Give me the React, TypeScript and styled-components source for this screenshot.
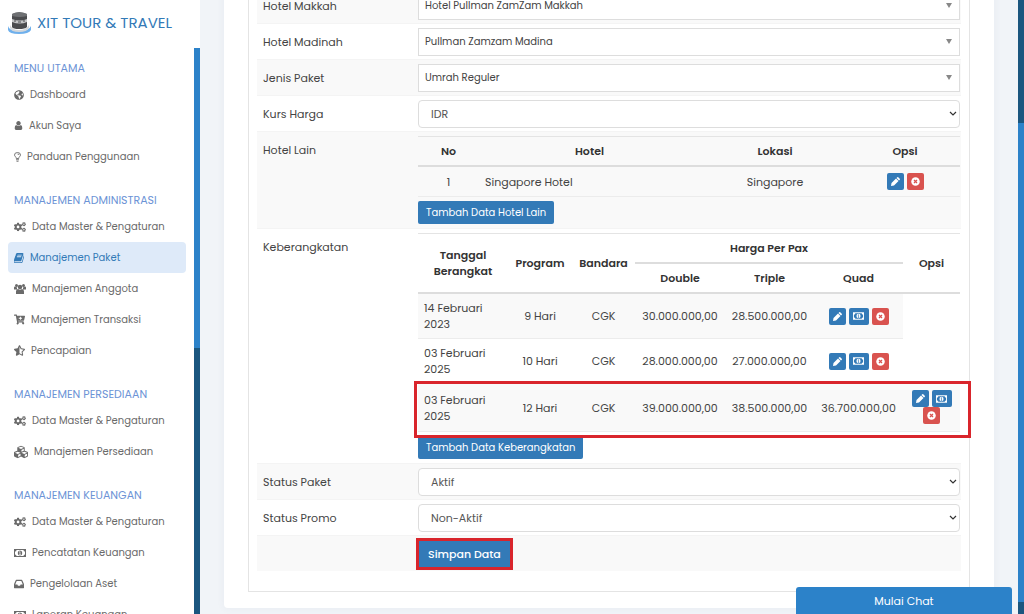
import React from "react";
import styled, { createGlobalStyle, css } from "styled-components";
import { FaGlobeAmericas, FaCogs, FaStarHalfAlt, FaCubes, FaCartPlus } from "react-icons/fa";

const blue = "#337ab7";
const line = "#e4e4e4";

const GlobalStyle = createGlobalStyle`
  * { box-sizing: border-box; }
  body {
    margin: 0;
    height: 100vh;
    overflow: hidden;
    background: #f1f4f8;
    color: #444;
    font: 400 11px/16px Poppins, Inter, "Liberation Sans", sans-serif;
  }
  button, select { font: inherit; }
`;

const Page = styled.div`
  display: flex;
  height: 100vh;
  overflow: hidden;
`;

const Sidebar = styled.aside`
  flex: 0 0 200px;
  background: #fff;
  display: flex;
  flex-direction: column;
`;

const Brand = styled.a`
  flex: 0 0 48px;
  display: flex;
  align-items: center;
  gap: 6px;
  padding: 0 8px 2px;
  color: ${blue};
  font-size: 15px;
  white-space: nowrap;
  text-decoration: none;
`;

const SideBody = styled.div`
  flex: 1;
  min-height: 0;
  display: flex;
`;

const Nav = styled.nav`
  flex: 1;
  overflow: hidden;
  padding: 4px 8px;
`;

const NavTitle = styled.h2`
  margin: 0;
  padding: 8px 6px 3px;
  font-size: 11px;
  font-weight: 400;
  line-height: 16px;
  color: #6c93d6;
  white-space: nowrap;
`;

const NavList = styled.ul`
  list-style: none;
  margin: 0 0 12px;
  padding: 0;
`;

const NavLink = styled.a<{ $active?: boolean }>`
  display: flex;
  align-items: center;
  gap: 6px;
  height: 31px;
  padding: 0 6px;
  border-radius: 4px;
  color: ${(p) => (p.$active ? blue : "#6a6a6a")};
  background: ${(p) => (p.$active ? "#deeaf9" : "transparent")};
  font-size: 10px;
  text-decoration: none;
  white-space: nowrap;
`;

const Track = styled.div<{ $side: "left" | "right" }>`
  flex: 0 0 6px;
  background: ${(p) =>
    p.$side === "left"
      ? "linear-gradient(#2c82c9 53%, #1b567f 53%)"
      : "linear-gradient(#1b567f 20%, #2c82c9 20%, #2c82c9 98%, #1b567f 98%)"};
`;

const Main = styled.main`
  flex: 1;
  min-width: 0;
  padding: 0 24px;
`;

const Card = styled.section`
  background: #fff;
  border-radius: 0 0 4px 4px;
  box-shadow: 0 0 8px rgba(60, 80, 120, 0.06);
  padding: 0 24px 16px;
`;

const Panel = styled.form`
  margin-top: -13px;
  border: 1px solid ${line};
  border-top: 0;
  padding: 0 8px 20px;
`;

const Row = styled.div<{ $striped?: boolean }>`
  display: grid;
  grid-template-columns: 161px minmax(0, 1fr);
  border-top: 1px solid #f4f4f4;
  background: ${(p) => (p.$striped ? "#f9f9f9" : "#fff")};
`;

const labelStyle = css`
  padding: 10px 6px 0;
`;
const Label = styled.label`${labelStyle}`;
const Caption = styled.span`${labelStyle}`;

const Value = styled.div<{ $table?: boolean }>`
  padding: 4px 1px ${(p) => (p.$table ? "4px" : "3px")} 0;
`;

const SelectWrap = styled.div`
  position: relative;
`;

const Select = styled.select<{ $flat?: boolean }>`
  display: block;
  width: 100%;
  height: 28px;
  padding: 0 ${(p) => (p.$flat ? "6px" : "12px")};
  border: 1px solid #ddd;
  border-radius: ${(p) => (p.$flat ? "0" : "4px")};
  background: #fff;
  color: ${(p) => (p.$flat ? "#444" : "#555")};
  font-size: ${(p) => (p.$flat ? "10px" : "11px")};
  appearance: none;
`;

const SelectMark = styled.svg<{ $flat?: boolean }>`
  position: absolute;
  top: 11px;
  right: ${(p) => (p.$flat ? "8px" : "3px")};
  pointer-events: none;
`;

const Table = styled.table`
  width: 100%;
  border-collapse: collapse;
  table-layout: fixed;
  border-top: 1px solid ${line};
`;

const Th = styled.th`
  padding: 6px;
  font-size: 11px;
  font-weight: 600;
  color: #333;
  border-bottom: 2px solid #ddd;
`;

const DepartureRow = styled.tr<{ $tall?: boolean }>`
  height: ${(p) => (p.$tall ? "48px" : "auto")};
`;

const Td = styled.td<{ $left?: boolean; $shade?: boolean; $tight?: boolean }>`
  padding: ${(p) => (p.$tight ? "6px 0" : "6px")};
  text-align: ${(p) => (p.$left ? "left" : "center")};
  background: ${(p) => (p.$shade ? "#f9f9f9" : "transparent")};
  border-bottom: 1px solid #ececec;
`;

const Actions = styled.div`
  display: flex;
  flex-wrap: wrap;
  justify-content: center;
  column-gap: 3px;
`;

const IconButton = styled.button<{ $danger?: boolean; $wide?: boolean }>`
  display: grid;
  place-items: center;
  width: ${(p) => (p.$wide ? "20px" : "17px")};
  height: 17px;
  padding: 0;
  border: 0;
  border-radius: 2px;
  color: #fff;
  background: ${(p) => (p.$danger ? "#d9534f" : blue)};
`;

const Button = styled.button<{ $large?: boolean }>`
  display: block;
  height: ${(p) => (p.$large ? "28px" : "23px")};
  padding: 0 ${(p) => (p.$large ? "10px" : "8px")};
  border: 0;
  border-radius: 2px;
  color: #fff;
  background: ${blue};
  font-size: ${(p) => (p.$large ? "11px" : "10px")};
  font-weight: ${(p) => (p.$large ? 500 : 400)};
  white-space: nowrap;
`;

const TableGap = styled.div`
  height: 4px;
`;

const Marked = styled.div`
  position: relative;
  width: max-content;
`;

const Frame = styled.span`
  position: absolute;
  inset: -2px;
  border: 3px solid #d9252c;
  pointer-events: none;
`;

const TableArea = styled.div`
  position: relative;
`;

const RowFrame = styled.span`
  position: absolute;
  left: -4px;
  right: -11px;
  bottom: -6px;
  height: 57px;
  border: 3px solid #d9252c;
  pointer-events: none;
`;

const Chat = styled.button`
  position: fixed;
  right: 12px;
  bottom: 0;
  width: 216px;
  height: 27px;
  border: 0;
  border-radius: 3px 3px 0 0;
  background: #2c82c9;
  color: #fff;
  font-size: 11px;
`;

const Glyph = ({ d, w = 10 }: { d: string; w?: number }) => (
  <svg width={w} height={w} viewBox="128 128 1536 1536" fill="currentColor" aria-hidden="true">
    <path d={d} />
  </svg>
);

const userPath =
  "M1536 1399q0 109-62.5 187t-150.5 78h-854q-88 0-150.5-78t-62.5-187q0-85 8.500-160.500t31.500-152 58.500-131 94-89 134.500-34.500q131 128 313 128t313-128q76 0 134.500 34.500t94 89 58.500 131 31.500 152 8.500 160.500zm-256-887q0 159-112.500 271.500t-271.500 112.500-271.500-112.500-112.500-271.500 112.500-271.500 271.500-112.500 271.500 112.500 112.500 271.500z";
const bookPath =
  "M1703 478q40 57 18 129l-275 906q-19 64-76.500 107.500t-122.500 43.500h-923q-77 0-148.500-53.500t-99.500-131.500q-24-67-2-127 0-4 3-27t4-37q1-8-3-21.500t-3-19.500q2-11 8-21t16.500-23.500 16.500-23.500q23-38 45-91.500t30-91.500q3-10 .5-30t-.5-28q3-11 17-28t17-23q21-36 42-92t25-90q1-9-2.500-32t.5-28q4-13 22-30.500t22-22.500q19-26 42.500-84.500t27.500-96.500q1-8-3-25.500t-2-26.500q2-8 9-18t18-23 17-21q8-12 16.500-30.500t15-35 16-36 19.500-32 26.500-23.500 36-11.500 47.500 5.500l-1 3q38-9 51-9h761q74 0 114 56t18 130l-274 906q-36 119-71.500 153.500t-128.500 34.500h-869q-27 0-38 15-11 16-1 43 24 70 144 70h923q29 0 56-15.500t35-41.500l300-987q7-22 5-57 38 15 59 43zm-1064 2q-4 13 2 22.500t20 9.500h608q13 0 25.500-9.500t16.500-22.500l21-64q4-13-2-22.500t-20-9.500h-608q-13 0-25.500 9.500t-16.500 22.500zm-83 256q-4 13 2 22.500t20 9.500h608q13 0 25.500-9.500t16.500-22.500l21-64q4-13-2-22.500t-20-9.500h-608q-13 0-25.500 9.500t-16.500 22.500z";
const inboxPath =
  "M1151 960h316q-1-3-2.500-8t-2.500-8l-212-496h-708l-212 496q-1 2-2.500 8t-2.500 8h316l95 192h320zm513 30v482q0 26-19 45t-45 19h-1408q-26 0-45-19t-19-45v-482q0-62 25-123l238-552q10-25 36.500-42t52.500-17h832q26 0 52.500 17t36.500 42l238 552q25 61 25 123z";

const BulbIcon = () => (
  <svg width="7" height="10" viewBox="0 0 14 20" fill="none" stroke="currentColor" strokeWidth="1.800" aria-hidden="true">
    <path d="M4.500 13Q4.500 11 3 9.500Q1 7.500 1 6Q1 1 7 1T13 6Q13 7.500 11 9.500Q9.500 11 9.500 13z" />
    <path d="M4 15.500h6M5 18.500h4M7 4q3 0 3 2" />
  </svg>
);

const UsersIcon = () => (
  <svg width="12" height="12" viewBox="0 0 24 24" fill="currentColor" aria-hidden="true">
    <circle cx="5" cy="5" r="3" />
    <circle cx="19" cy="5" r="3" />
    <circle cx="12" cy="8" r="4.500" />
    <path d="M0 13V9q0-2 2-2l4 2v4zM24 13V9q0-2-2-2l-4 2v4zM4 22v-5q0-5 4-5 4 3 8 0 4 0 4 5v5z" />
  </svg>
);

const MoneyIcon = ({ w = 12 }: { w?: number }) => (
  <svg width={w} height={Math.round(w * 0.7)} viewBox="0 0 24 16" aria-hidden="true">
    <path
      fill="currentColor"
      fillRule="evenodd"
      d="M0 0h24v16H0zM5 2q0 3-3 3v6q3 0 3 3h14q0-3 3-3V5q-3 0-3-3z"
    />
    <ellipse cx="12" cy="8" rx="4.500" ry="5" fill="currentColor" />
    <path d="M10.500 6l1.500-1v6m-1.500 0h3" stroke={w < 12 ? blue : "#fff"} strokeWidth="1.400" fill="none" />
  </svg>
);

const PencilIcon = () => (
  <svg width="9" height="9" viewBox="0 0 18 18" fill="currentColor" aria-hidden="true">
    <path d="M0 18l1-6L10 3l5 5-9 9zM11 2l1.500-1.500q1-1 2 0l3 3q1 1 0 2L16 7z" />
  </svg>
);

const RemoveIcon = () => (
  <svg width="9" height="9" viewBox="0 0 18 18" aria-hidden="true">
    <circle cx="9" cy="9" r="8.500" fill="currentColor" />
    <path d="M6 6l6 6M12 6l-6 6" stroke="#d9534f" strokeWidth="2.500" />
  </svg>
);

const Logo = () => (
  <svg width="23" height="24" viewBox="0 0 23 24" aria-hidden="true">
    <path d="M0 15q1 5 11 5t12-5v4q-2 4-12 4T0 19z" fill="#6fb0ec" />
    <path d="M2 14q2 5 9 5t10-5v3q-2 4-10 4T2 17z" fill="#d3d7db" />
    <path d="M4 3q7-3 15 0v13q-2 2-8 2t-7-2z" fill="#4b4c4f" />
    <path d="M4 3q7-4 15 0v2q-7 2-15 0z" fill="#6e7073" />
    <path d="M4 8q8 3 15 0v3q-7 3-15 0z" fill="#c4c5c7" />
    <path d="M6 10h2m2 1h3m2-1h2" stroke="#4b4c4f" />
  </svg>
);

type Item = { text: string; icon: React.ReactNode; active?: boolean };
const groups: { title: string; items: Item[] }[] = [
  {
    title: "MENU UTAMA",
    items: [
      { text: "Dashboard", icon: <FaGlobeAmericas size={10} /> },
      { text: "Akun Saya", icon: <Glyph d={userPath} w={9} /> },
      { text: "Panduan Penggunaan", icon: <BulbIcon /> },
    ],
  },
  {
    title: "MANAJEMEN ADMINISTRASI",
    items: [
      { text: "Data Master & Pengaturan", icon: <FaCogs size={12} /> },
      { text: "Manajemen Paket", icon: <Glyph d={bookPath} />, active: true },
      { text: "Manajemen Anggota", icon: <UsersIcon /> },
      { text: "Manajemen Transaksi", icon: <FaCartPlus size={11} /> },
      { text: "Pencapaian", icon: <FaStarHalfAlt size={11} /> },
    ],
  },
  {
    title: "MANAJEMEN PERSEDIAAN",
    items: [
      { text: "Data Master & Pengaturan", icon: <FaCogs size={12} /> },
      { text: "Manajemen Persediaan", icon: <FaCubes size={14} /> },
    ],
  },
  {
    title: "MANAJEMEN KEUANGAN",
    items: [
      { text: "Data Master & Pengaturan", icon: <FaCogs size={12} /> },
      { text: "Pencatatan Keuangan", icon: <MoneyIcon /> },
      { text: "Pengelolaan Aset", icon: <Glyph d={inboxPath} /> },
      { text: "Laporan Keuangan", icon: <MoneyIcon /> },
    ],
  },
];

const Field = ({ id, label, value, flat, striped }: { id: string; label: string; value: string; flat?: boolean; striped?: boolean }) => (
  <Row $striped={striped}>
    <Label htmlFor={id}>{label}</Label>
    <Value>
      <SelectWrap>
        <Select id={id} $flat={flat} defaultValue={value}>
          <option>{value}</option>
        </Select>
        {flat ? (
          <SelectMark $flat width="6" height="5" viewBox="0 0 6 5" aria-hidden="true">
            <path d="M0 0h6L3 5z" fill="#888" />
          </SelectMark>
        ) : (
          <SelectMark width="8" height="6" viewBox="0 0 8 6" aria-hidden="true">
            <path d="M1 1l3 3 3-3" fill="none" stroke="#333" strokeWidth="1.200" />
          </SelectMark>
        )}
      </SelectWrap>
    </Value>
  </Row>
);

const RowActions = ({ money }: { money?: boolean }) => (
  <Actions>
    <IconButton type="button" aria-label="Ubah"><PencilIcon /></IconButton>
    {money && <IconButton type="button" $wide aria-label="Harga"><MoneyIcon w={11} /></IconButton>}
    <IconButton type="button" $danger aria-label="Hapus"><RemoveIcon /></IconButton>
  </Actions>
);

const departures = [
  { date: "14 Februari 2023", program: "9 Hari", prices: ["30.000.000,00", "28.500.000,00"] },
  { date: "03 Februari 2025", program: "10 Hari", prices: ["28.000.000,00", "27.000.000,00"] },
  { date: "03 Februari 2025", program: "12 Hari", prices: ["39.000.000,00", "38.500.000,00", "36.700.000,00"] },
];

export default function App() {
  return (
    <>
      <GlobalStyle />
      <Page>
        <Sidebar>
          <Brand href="#"><Logo />XIT TOUR &amp; TRAVEL</Brand>
          <SideBody>
            <Nav>
              {groups.map((g) => (
                <React.Fragment key={g.title}>
                  <NavTitle>{g.title}</NavTitle>
                  <NavList>
                    {g.items.map((i) => (
                      <li key={i.text}>
                        <NavLink href="#" $active={i.active}>{i.icon}{i.text}</NavLink>
                      </li>
                    ))}
                  </NavList>
                </React.Fragment>
              ))}
            </Nav>
            <Track $side="left" />
          </SideBody>
        </Sidebar>
        <Main>
          <Card>
            <Panel>
              <Field id="makkah" label="Hotel Makkah" value="Hotel Pullman ZamZam Makkah" flat striped />
              <Field id="madinah" label="Hotel Madinah" value="Pullman Zamzam Madina" flat />
              <Field id="jenis" label="Jenis Paket" value="Umrah Reguler" flat striped />
              <Field id="kurs" label="Kurs Harga" value="IDR" />
              <Row $striped>
                <Caption>Hotel Lain</Caption>
                <Value $table>
                  <Table>
                    <colgroup><col width="61" /><col /><col width="150" /><col width="110" /></colgroup>
                    <thead><tr><Th>No</Th><Th>Hotel</Th><Th>Lokasi</Th><Th>Opsi</Th></tr></thead>
                    <tbody><tr><Td>1</Td><Td $left>Singapore Hotel</Td><Td>Singapore</Td><Td><RowActions /></Td></tr></tbody>
                  </Table>
                  <TableGap />
                  <Button type="button">Tambah Data Hotel Lain</Button>
                </Value>
              </Row>
              <Row>
                <Caption>Keberangkatan</Caption>
                <Value $table>
                  <TableArea>
                    <Table>
                      <colgroup>
                        <col width="90" /><col width="64" /><col width="63" /><col width="90" /><col width="89" /><col width="89" /><col />
                      </colgroup>
                      <thead>
                        <tr><Th rowSpan={2}>Tanggal Berangkat</Th><Th rowSpan={2}>Program</Th><Th rowSpan={2}>Bandara</Th><Th colSpan={3}>Harga Per Pax</Th><Th rowSpan={2}>Opsi</Th></tr>
                        <tr><Th>Double</Th><Th>Triple</Th><Th>Quad</Th></tr>
                      </thead>
                      <tbody>
                        {departures.map((d, n) => (
                          <DepartureRow key={n} $tall={d.prices.length === 3}>
                            <Td $left $shade={n !== 1}>{d.date}</Td>
                            <Td $shade={n !== 1}>{d.program}</Td>
                            <Td $shade={n !== 1}>CGK</Td>
                            {d.prices.map((p) => <Td key={p} $tight $shade={n !== 1}>{p}</Td>)}
                            <Td $shade={n !== 1}><RowActions money /></Td>
                          </DepartureRow>
                        ))}
                      </tbody>
                    </Table>
                    <RowFrame />
                  </TableArea>
                  <TableGap />
                  <Button type="button">Tambah Data Keberangkatan</Button>
                </Value>
              </Row>
              <Field id="paket" label="Status Paket" value="Aktif" striped />
              <Field id="promo" label="Status Promo" value="Non-Aktif" />
              <Row $striped>
                <span />
                <Value>
                  <Marked>
                    <Button type="button" $large>Simpan Data</Button>
                    <Frame />
                  </Marked>
                </Value>
              </Row>
            </Panel>
          </Card>
        </Main>
        <Track $side="right" />
        <Chat type="button">Mulai Chat</Chat>
      </Page>
    </>
  );
}
